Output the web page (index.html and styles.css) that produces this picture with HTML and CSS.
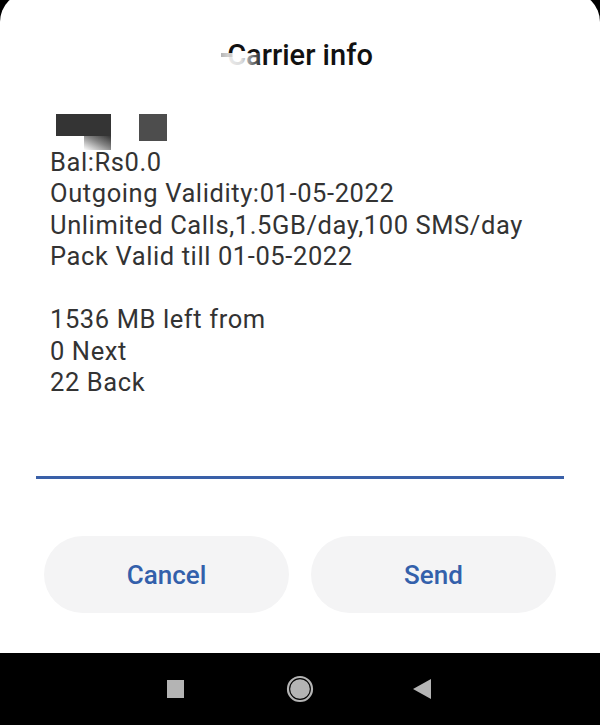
FILE: index.html
```html
<!DOCTYPE html>
<html lang="en">
<head>
<meta charset="utf-8">
<title>Carrier info</title>
<link rel="stylesheet" href="styles.css">
</head>
<body>
<div class="screen">
  <div class="dialog">
    <h1 class="title">Carrier info</h1>
    <span class="smudge"></span>
    <div class="field">
      <div class="redacted"><span class="blk blk1"></span><span class="blk blk2"></span></div>
      <p class="msg">Bal:Rs0.0<br>Outgoing Validity:01-05-2022<br>Unlimited Calls,1.5GB/day,100 SMS/day<br>Pack Valid till 01-05-2022<br><br>1536 MB left from<br>0 Next<br>22 Back</p>
    </div>
    <div class="actions">
      <button class="btn">Cancel</button>
      <button class="btn">Send</button>
    </div>
  </div>
  <nav class="navbar">
    <svg class="nav-recent" width="18" height="18" viewBox="0 0 18 18"><rect x="0" y="0" width="17" height="18" fill="#b4b4b4"/></svg>
    <svg class="nav-home" width="28" height="28" viewBox="0 0 28 28"><circle cx="14" cy="14" r="12" fill="none" stroke="#b4b4b4" stroke-width="2.2"/><circle cx="14" cy="14" r="9.8" fill="#b4b4b4"/></svg>
    <svg class="nav-back" width="20" height="20" viewBox="0 0 20 20"><polygon points="1,10 19,0 19,20" fill="#b4b4b4"/></svg>
  </nav>
</div>
</body>
</html>
```
FILE: styles.css
```css
html, body {
  margin: 0;
  padding: 0;
  background: #000;
}
.screen {
  width: 600px;
  height: 725px;
  overflow: hidden;
  background: #000;
  font-family: Roboto, "Noto Sans", sans-serif;
}
.dialog {
  position: relative;
  box-sizing: border-box;
  margin-top: -8px;
  height: 661px;
  background: #fff;
  border-radius: 30px 30px 0 0;
  padding-top: 45px;
}
.title {
  margin: 0;
  text-align: center;
  font-size: 29px;
  font-weight: 500;
  line-height: 36px;
  color: #111;
  letter-spacing: 0;
}
.smudge {
  position: absolute;
  left: 221px;
  top: 61px;
  width: 42px;
  height: 17px;
  background:
    linear-gradient(to right, rgba(120,120,120,0.55) 0%, rgba(160,160,160,0.35) 25%, rgba(255,255,255,0) 30%) top left / 100% 4px no-repeat,
    linear-gradient(to right, rgba(255,255,255,0.95) 0%, rgba(255,255,255,0.85) 50%, rgba(255,255,255,0) 100%);
}
.field {
  margin: 42px 36px 0;
  padding: 0 0 77.5px 14px;
  border-bottom: 3px solid #3a60a8;
}
.redacted {
  display: flex;
  height: 31.5px;
}
.blk {
  display: block;
  position: relative;
  margin-top: -1px;
}
.blk1 {
  margin-left: 6px;
  width: 55px;
  height: 22px;
  background: #343434;
}
.blk1::after {
  content: "";
  position: absolute;
  left: 28px;
  top: 22px;
  width: 27px;
  height: 14px;
  background: linear-gradient(to top right, rgba(255,255,255,0.9) 0%, rgba(52,52,52,0.6) 55%, #343434 100%);
}
.blk2 {
  margin-left: 28px;
  width: 28px;
  height: 27px;
  background: #4d4d4d;
}
.msg {
  margin: 0;
  font-size: 25.5px;
  letter-spacing: 0.6px;
  line-height: 31.5px;
  color: #333;
}
.actions {
  display: flex;
  gap: 22px;
  margin: 57px 44px 0;
}
.btn {
  flex: 1;
  height: 77px;
  border: none;
  border-radius: 39px;
  background: #f4f4f5;
  color: #3360ab;
  font-family: Roboto, "Noto Sans", sans-serif;
  font-size: 26px;
  font-weight: 500;
  padding: 0;
}
.navbar {
  display: flex;
  align-items: center;
  height: 72px;
  padding-left: 167px;
  background: #000;
}
.nav-recent { margin-right: 101px; }
.nav-home { margin-right: 98px; }
```
